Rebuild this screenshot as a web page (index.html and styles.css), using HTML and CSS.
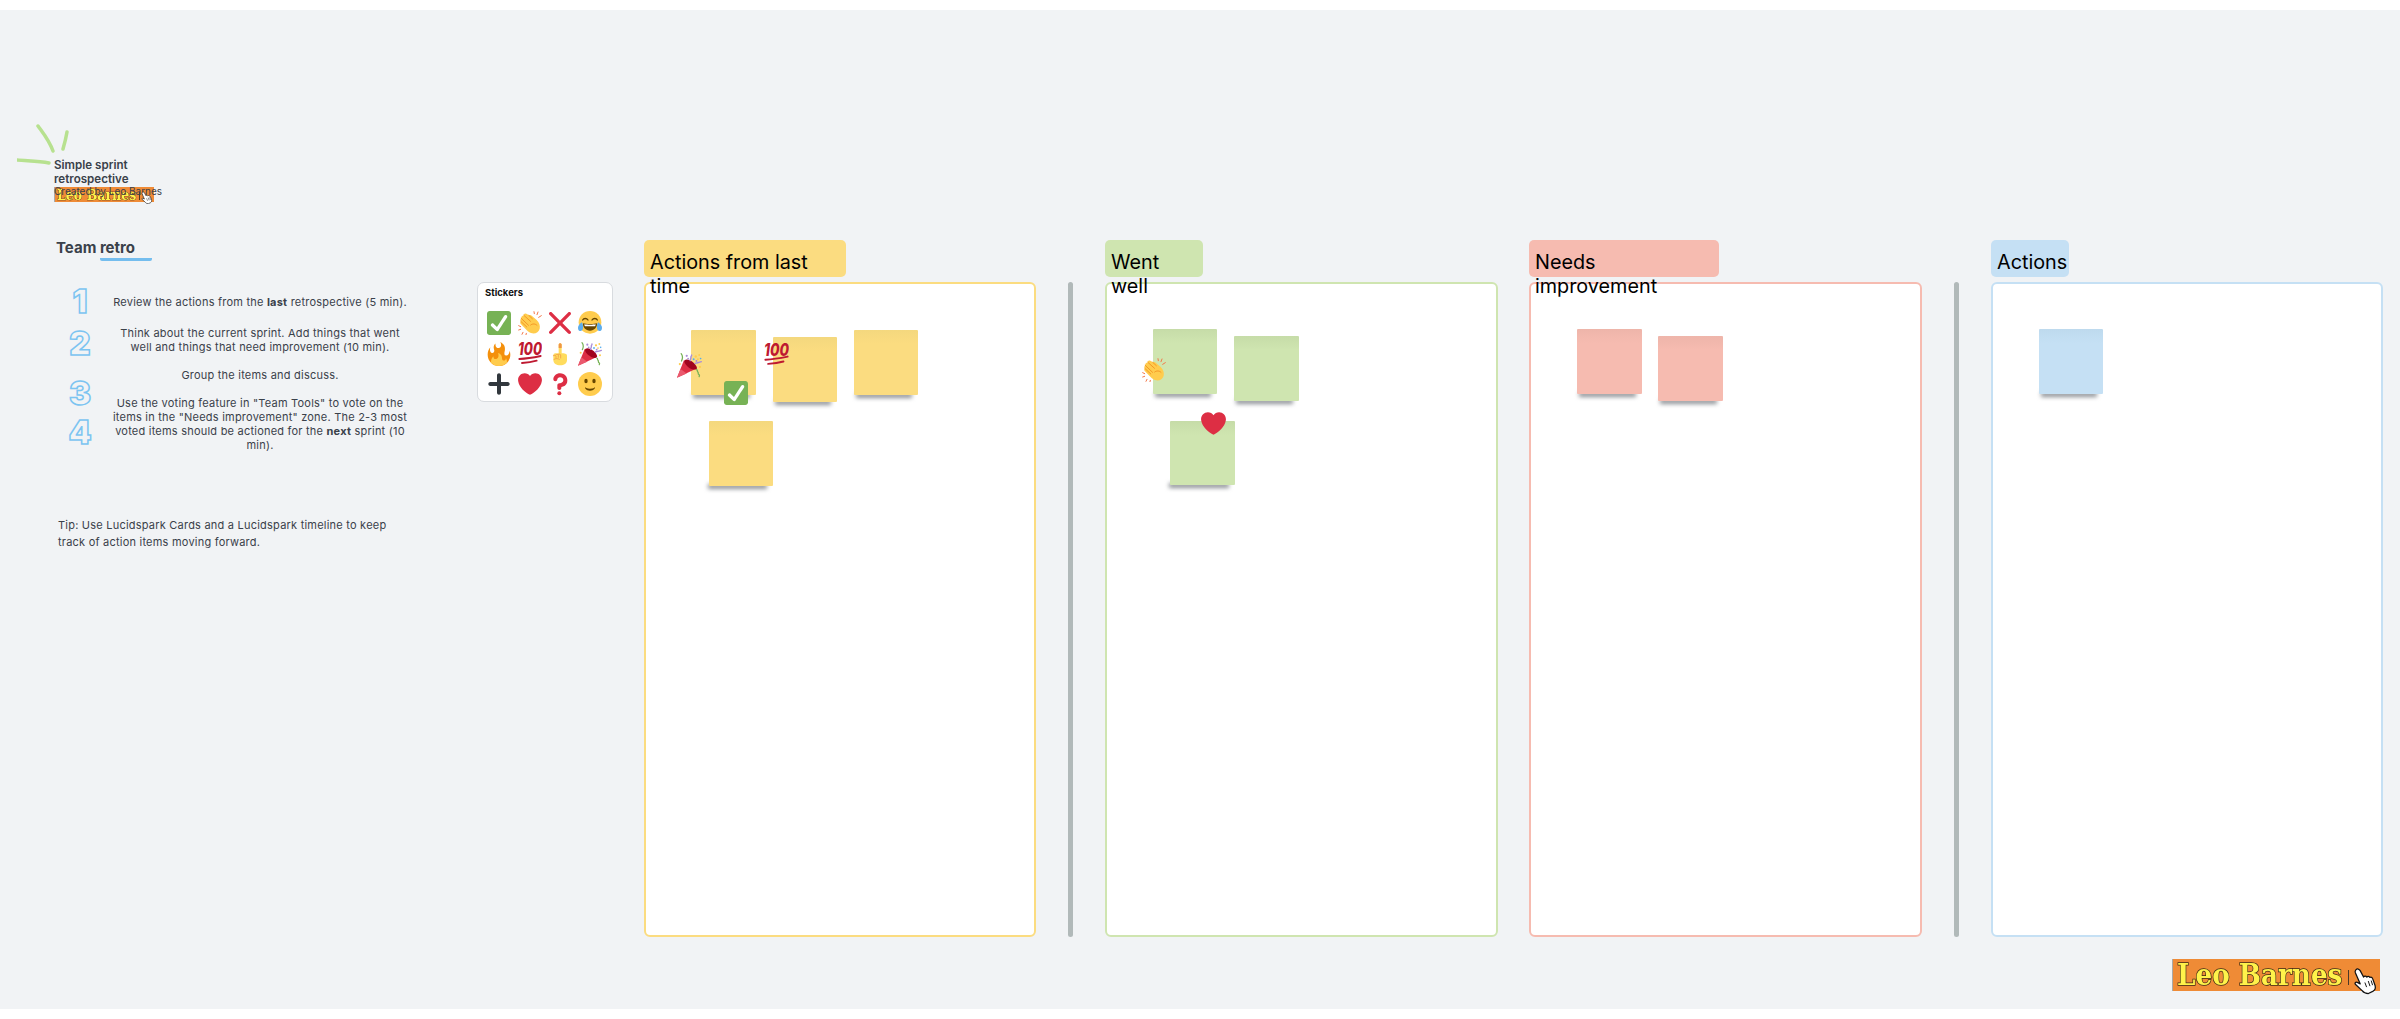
FILE: index.html
```html
<!DOCTYPE html>
<html lang="en">
<head>
  <meta charset="UTF-8">
  <title>Simple sprint retrospective</title>
  <link rel="stylesheet" href="styles.css">
</head>
<body>

  <!-- emoji set, reused by the sticker panel and the notes -->
  <svg class="sprite" xmlns="http://www.w3.org/2000/svg">
    <symbol id="e-check" viewBox="0 0 36 36">
      <path fill="#77B255" d="M36 32c0 2.209-1.791 4-4 4H4c-2.209 0-4-1.791-4-4V4c0-2.209 1.791-4 4-4h28c2.209 0 4 1.791 4 4v28z"/>
      <path fill="#FFF" d="M29.28 6.362c-1.156-.751-2.704-.422-3.458.736L14.936 23.877l-5.029-4.65c-1.014-.938-2.596-.875-3.533.138-.937 1.014-.875 2.596.139 3.533l7.209 6.666c.48.445 1.09.665 1.696.665.673 0 1.534-.282 2.099-1.139.332-.506 12.5-19.27 12.5-19.27.751-1.159.421-2.707-.737-3.458z"/>
    </symbol>
    <symbol id="e-clap" viewBox="0 0 36 36">
      <g fill="none" stroke="#F4784A" stroke-width="1.500" stroke-linecap="round">
        <path d="M1 22l3 1.500M1 28.500l3-1M6 35l1.500-3M12 35.500l.5-2M24 1l.5 3M30 1.500l-1.500 4M35 7l-4 2.500"/>
      </g>
      <path fill="#FFCC4D" d="M9 6.500l-.5-1.800c2-1.500 4-1 5.500.3l2 1.500c1.800-.8 3.500-.4 5 1l7 6c4 4 5.500 9 4.500 13-1.500 5.500-7 8.500-13 6.500-3.500-1.200-6-3.800-8.500-6.500L4.500 20c-1.500-1.500-1.500-3.500-.3-4.500-1-1.500-.8-3.500.7-4.500-.5-2 .8-4 4.100-4.500z"/>
      <path fill="none" stroke="#F19020" stroke-width="1.300" stroke-linecap="round" d="M8.800 6.500l10 9M4.800 11l11 10.500M4.200 15.500l9 8.500M16 6.500l5.500 5M19 21c3-2.500 7-2 9.500.5"/>
    </symbol>
    <symbol id="e-cross" viewBox="0 0 36 36">
      <path fill="#DD2E44" d="M21.533 18.002L33.768 5.768c.976-.976.976-2.559 0-3.535-.977-.977-2.559-.977-3.536 0L17.998 14.467 5.764 2.233c-.976-.977-2.56-.977-3.535 0-.977.976-.977 2.559 0 3.535l12.234 12.234L2.201 30.265c-.977.977-.977 2.559 0 3.535.488.488 1.128.732 1.768.732s1.28-.244 1.768-.732l12.262-12.263 12.234 12.234c.488.488 1.128.732 1.768.732.64 0 1.279-.244 1.768-.732.976-.977.976-2.559 0-3.535L21.533 18.002z"/>
    </symbol>
    <symbol id="e-joy" viewBox="0 0 36 36">
      <circle fill="#FFCC4D" cx="18" cy="17" r="17"/>
      <path fill="none" stroke="#664500" stroke-width="2" stroke-linecap="round" d="M7 13.500c1.500-3 6-3 8 0M21 13.500c2-3 6.500-3 8 0"/>
      <path fill="#664500" d="M7.500 18.500c3 1.500 18 1.500 21 0 .5 6-4 11-10.500 11s-11-5-10.500-11z"/>
      <path fill="#FFF" d="M9.500 19.800c4 .9 13 .9 17 0-.1 1.300-.4 2.300-.9 3.200H10.400c-.5-.9-.8-1.900-.9-3.200z"/>
      <path fill="#5DADEC" d="M0 25c0-3 3-6 6-8 1 2 2 6 1.500 9-.4 3-2.500 4.500-4.500 4-2-.4-3-2.500-3-5zM36 25c0-3-3-6-6-8-1 2-2 6-1.500 9 .4 3 2.500 4.500 4.500 4 2-.4 3-2.500 3-5z"/>
    </symbol>
    <symbol id="e-fire" viewBox="0 0 36 36">
      <path fill="#F4900C" d="M35 19c0-2.062-.367-4.039-1.04-5.868-.46 5.389-3.333 8.157-6.335 6.868-2.812-1.208-.917-5.917-.777-8.164.236-3.809-.012-8.169-6.931-11.794 2.875 5.5.333 8.917-2.333 9.125-2.958.231-5.667-2.542-4.667-7.042-3.238 2.386-3.332 6.402-2.333 9 1.042 2.708-.042 4.958-2.583 5.208-2.84.28-4.418-3.041-2.963-8.333C2.52 10.965 1 14.805 1 19c0 9.389 7.611 17 17 17s17-7.611 17-17z"/>
      <path fill="#FFCC4D" d="M28.394 23.999c.148 3.084-2.561 4.293-4.019 3.709-2.106-.843-1.541-2.291-2.083-5.291s-2.625-5.083-5.708-6c2.25 6.333-1.247 8.667-3.08 9.084-1.872.426-3.753-.001-3.968-4.007C7.352 23.668 6 26.676 6 30c0 .368.023.73.055 1.09C9.125 34.124 13.342 36 18 36s8.875-1.876 11.945-4.91c.032-.36.055-.722.055-1.09 0-2.187-.584-4.236-1.606-6.001z"/>
    </symbol>
    <symbol id="e-hundred" viewBox="0 0 36 36">
      <text class="hundred" x="0" y="20" textLength="36" lengthAdjust="spacingAndGlyphs">100</text>
      <path fill="none" stroke="#BE1931" stroke-width="2.800" stroke-linecap="round" d="M2 25.500c10-.5 20-2 32-4.500M6 31.500c8-.5 15-1.500 22-3.500"/>
    </symbol>
    <symbol id="e-point" viewBox="0 0 36 36">
      <path fill="#FFDC5D" d="M16 4c0-3 4.500-3 4.500 0v13c4 0 8 .5 8 3.500V27c0 5-4.500 8-10 8-6 0-10.500-3-10.500-8.500V20c0-2 1.500-3 3-3h5z"/>
      <path fill="#EF9645" d="M16 4c0-3 4.500-3 4.500 0v5H16z"/>
      <path fill="none" stroke="#EF9645" stroke-width="1.100" stroke-linecap="round" d="M8 20.500c2-.8 3.500-.5 4 .5v3M12 19c1.500-.8 3-.5 3.500.5V23M15.500 18.500c1.500-.6 3-.3 3.500.8V24M9 26c2.500-1.500 6-1.500 8 0"/>
    </symbol>
    <symbol id="e-popper" viewBox="0 0 36 36">
      <path fill="#DD2E44" d="M0 35.500L10 10.500l19 11.500z"/>
      <path fill="#EA596E" d="M0 35.500L5 23l9 6.500z"/>
      <path fill="#A0041E" d="M11.500 10c2.500-2 8 0 12 3.500s6.500 8 4.500 9.500c-2 2-8 .5-12-3s-7-8-4.500-10z"/>
      <path fill="none" stroke="#77B255" stroke-width="1.800" stroke-linecap="round" d="M6 1c2 2.500 2.500 6.500.5 10.500M28 24c2.500.5.500 2.500 2 3.500s-.5 2.500 1.500 3.500 0 2 .5 3"/>
      <path fill="none" stroke="#AA8DD8" stroke-width="2" stroke-linecap="round" d="M19 11c-.5-2 1.500-2.500 1-4.500s1.500-2 1-3.500M26 15c3-1 5.500-1.200 9-2.500"/>
      <g fill="#FFCC4D"><circle cx="27" cy="5" r="1.700"/><circle cx="32" cy="3" r="1.400"/><circle cx="4" cy="16" r="1.500"/><circle cx="33" cy="20" r="1.500"/><circle cx="30" cy="9" r="1.300"/></g>
      <g fill="#55ACEE"><circle cx="24" cy="9" r="1.400"/><circle cx="34" cy="8" r="1.200"/></g>
      <g fill="#AA8DD8"><circle cx="14" cy="4" r="1.600"/><circle cx="16" cy="8" r="1.300"/><circle cx="28" cy="11.500" r="1.400"/></g>
    </symbol>
    <symbol id="e-plus" viewBox="0 0 36 36">
      <path fill="#31373D" d="M31 15H21V5c0-1.657-1.343-3-3-3s-3 1.343-3 3v10H5c-1.657 0-3 1.343-3 3s1.343 3 3 3h10v10c0 1.657 1.343 3 3 3s3-1.343 3-3V21h10c1.657 0 3-1.343 3-3s-1.343-3-3-3z"/>
    </symbol>
    <symbol id="e-heart" viewBox="0 0 36 36">
      <path fill="#DD2E44" d="M35.885 11.833c0-5.45-4.418-9.868-9.867-9.868-3.308 0-6.227 1.633-8.018 4.129-1.791-2.496-4.71-4.129-8.017-4.129-5.45 0-9.868 4.417-9.868 9.868 0 .772.098 1.52.266 2.241C1.751 22.587 11.216 31.568 18 34.034c6.783-2.466 16.249-11.447 17.617-19.959.17-.721.268-1.469.268-2.242z"/>
    </symbol>
    <symbol id="e-question" viewBox="0 0 36 36">
      <path fill="#DD2E44" d="M17 27c-1.657 0-3-1.343-3-3v-4c0-1.657 1.343-3 3-3 .603-.006 6-1 6-5 0-2-2-4-5-4-2.441 0-4 2-4 3 0 1.657-1.343 3-3 3s-3-1.343-3-3c0-4.878 4.58-9 10-9 8 0 11 5.982 11 11 0 4.145-2.277 7.313-6.413 8.92-.9.351-1.79.587-2.587.747V24c0 1.657-1.343 3-3 3z"/>
      <circle fill="#DD2E44" cx="17" cy="32" r="3"/>
    </symbol>
    <symbol id="e-smile" viewBox="0 0 36 36">
      <circle fill="#FFCC4D" cx="18" cy="18" r="18"/>
      <path fill="#664500" d="M10.515 23.621C10.56 23.8 11.683 28 18 28c6.318 0 7.44-4.2 7.485-4.379.055-.217-.043-.442-.237-.554-.195-.111-.439-.078-.6.077C24.629 23.163 22.768 25 18 25s-6.63-1.837-6.648-1.855C11.256 23.05 11.128 23 11 23c-.084 0-.169.021-.246.064-.196.112-.294.339-.239.557z"/>
      <ellipse fill="#664500" cx="12" cy="13.500" rx="2.500" ry="3.500"/>
      <ellipse fill="#664500" cx="24" cy="13.500" rx="2.500" ry="3.500"/>
    </symbol>
    <symbol id="hand" viewBox="0 0 27 28">
      <path fill="#fff" stroke="#111" stroke-width="1.300" stroke-linejoin="round" d="M5 2.500c1.500-1.500 3.500-1 4.500.8L13 10c.5-1.300 2.600-1.400 3.400 0 .6-1 2.500-1.200 3.200.4 1-.6 2.400-.1 2.800 1.200L25 19c.6 2.500-.5 4.500-2 5.500L18 27c-3 0-5-1-6.500-3L4.500 17.500c-1-1.500.5-3 2-2L9.500 17 4.500 5.500c-.4-1-.2-2.200.5-3z"/>
      <path fill="none" stroke="#111" stroke-width="1" stroke-linecap="round" d="M14.500 16l1.500 4M18 14.500l1.500 4.500M21 14l1.200 4"/>
    </symbol>
  </svg>

  <div class="canvas">

    <section class="guide">
      <svg class="sparks" viewBox="0 0 60 50" aria-hidden="true">
        <path d="M21 3c5 7 11 14 15 25M50 9c-1 6-2 10-4 17M0 37c10 1 21 1 32 3"/>
      </svg>

      <h1 class="guide-title">Simple sprint retrospective</h1>
      <p class="created">Created by Leo Barnes</p>
      <div class="logo logo-small">
        <span class="logo-name">Leo Barnes</span>
        <svg class="logo-hand"><use href="#hand"/></svg>
      </div>

      <h2 class="team">Team <span class="team-mark">retro</span></h2>

      <div class="steps">
        <div class="step-nums">
          <span class="num num-1">1</span>
          <span class="num num-2">2</span>
          <span class="num num-3">3</span>
          <span class="num num-4">4</span>
        </div>
        <div class="step-texts">
          <p class="step-first">Review the actions from the <b>last</b> retrospective (5 min).</p>
          <p>Think about the current sprint. Add things that went well and things that need improvement (10 min).</p>
          <p>Group the items and discuss.</p>
          <p>Use the voting feature in "Team Tools" to vote on the items in the "Needs improvement" zone. The 2-3 most voted items should be actioned for the <b>next</b> sprint (10 min).</p>
        </div>
      </div>

      <p class="tip">Tip: Use Lucidspark Cards and a Lucidspark timeline to keep track of action items moving forward.</p>
    </section>

    <aside class="stickers">
      <h3 class="stickers-title">Stickers</h3>
      <div class="sticker-grid">
        <svg><use href="#e-check"/></svg>
        <svg><use href="#e-clap"/></svg>
        <svg><use href="#e-cross"/></svg>
        <svg><use href="#e-joy"/></svg>
        <svg><use href="#e-fire"/></svg>
        <svg><use href="#e-hundred"/></svg>
        <svg><use href="#e-point"/></svg>
        <svg><use href="#e-popper"/></svg>
        <svg><use href="#e-plus"/></svg>
        <svg><use href="#e-heart"/></svg>
        <svg><use href="#e-question"/></svg>
        <svg><use href="#e-smile"/></svg>
      </div>
    </aside>

    <section class="zone zone-yellow zone-first">
      <h2 class="zone-head head-last">Actions from last time</h2>
      <div class="board">
        <div class="note n1-a"></div>
        <div class="note n1-b"></div>
        <div class="note n1-c"></div>
        <div class="note n1-d"></div>
        <svg class="stuck st-popper"><use href="#e-popper"/></svg>
        <svg class="stuck st-hundred"><use href="#e-hundred"/></svg>
        <svg class="stuck st-check"><use href="#e-check"/></svg>
      </div>
    </section>

    <div class="divider"></div>

    <section class="zone zone-green">
      <h2 class="zone-head head-well">Went well</h2>
      <div class="board">
        <div class="note n2-a"></div>
        <div class="note n2-b"></div>
        <div class="note n2-c"></div>
        <svg class="stuck st-clap"><use href="#e-clap"/></svg>
        <svg class="stuck st-heart"><use href="#e-heart"/></svg>
      </div>
    </section>

    <section class="zone zone-red">
      <h2 class="zone-head head-needs">Needs improvement</h2>
      <div class="board">
        <div class="note n3-a"></div>
        <div class="note n3-b"></div>
      </div>
    </section>

    <div class="divider"></div>

    <section class="zone zone-blue">
      <h2 class="zone-head head-actions">Actions</h2>
      <div class="board">
        <div class="note n4-a"></div>
      </div>
    </section>

    <div class="logo logo-big">
      <span class="logo-name">Leo Barnes</span>
      <svg class="logo-hand"><use href="#hand"/></svg>
    </div>
  </div>

</body>
</html>
```

FILE: styles.css
```css
body {
  margin: 0;
  background: #fff;
  font-family: Inter, "Noto Sans", sans-serif;
  color: #3a414a;
}

.sprite {
  display: none;
}

.canvas {
  position: relative;
  display: flex;
  align-items: flex-start;
  height: 999px;
  margin-top: 10px;
  background: #f1f3f5;
  overflow: hidden;
}

/* left column */
.guide {
  position: relative;
  box-sizing: border-box;
  width: 477px;
  flex: none;
  padding: 148px 0 0 54px;
}

.sparks {
  position: absolute;
  left: 17px;
  top: 113px;
  width: 60px;
  height: 50px;
  fill: none;
  stroke: #b7e18f;
  stroke-width: 3.5;
  stroke-linecap: round;
}

.guide-title {
  width: 110px;
  margin: 0;
  font-size: 11.6px;
  line-height: 14px;
  font-weight: 600;
}

.created {
  position: relative;
  z-index: 1;
  margin: -2px 0 0;
  font-size: 10px;
  line-height: 14px;
  white-space: nowrap;
}

.team {
  margin: 36px 0 0 2px;
  font-size: 15px;
  line-height: 20px;
  font-weight: 700;
}

.team-mark {
  display: inline-block;
  border-bottom: 3px solid #74bdee;
  border-radius: 2px;
  height: 20px;
  width: 52px;
}

.steps {
  display: flex;
  margin: 28px 0 0 13px;
}

.step-nums {
  display: flex;
  flex-direction: column;
  width: 42px;
  flex: none;
}

.num {
  width: 26px;
  height: 24px;
  font-size: 33px;
  line-height: 24px;
  font-weight: 900;
  text-align: center;
  color: #f1f3f5;
  -webkit-text-stroke: 1.5px #7cc4f1;
}

.num-1 { margin-top: 0; }
.num-2 { margin-top: 18px; }
.num-3 { margin-top: 26px; }
.num-4 { margin-top: 15px; }

.step-texts {
  width: 302px;
  flex: none;
  font-size: 11px;
  letter-spacing: 0.22px;
  line-height: 14px;
  text-align: center;
  margin-top: 6px;
}

.step-texts p {
  margin: 0 0 14px;
}

.step-texts .step-first {
  margin-bottom: 17px;
}

.tip {
  width: 345px;
  margin: 51px 0 0 4px;
  font-size: 11px;
  letter-spacing: 0.22px;
  line-height: 17px;
}

/* sticker tray */
.stickers {
  box-sizing: border-box;
  width: 136px;
  height: 120px;
  flex: none;
  margin-top: 272px;
  padding: 4px 6px;
  background: #fff;
  border: 1.5px solid #d8dbdf;
  border-radius: 7px;
}

.stickers-title {
  margin: 0 0 0 1px;
  font-size: 9.5px;
  line-height: 12px;
  font-weight: 700;
  color: #111;
}

.sticker-grid {
  display: grid;
  grid-template-columns: repeat(4, 30.4px);
  grid-auto-rows: 30.5px;
  margin-top: 9px;
  place-items: center;
}

.sticker-grid svg {
  width: 24px;
  height: 24px;
}

.hundred {
  font-family: Inter, sans-serif;
  font-size: 25px;
  font-weight: 800;
  font-style: italic;
  fill: #be1931;
}

/* retro columns */
.zone {
  width: 393px;
  flex: none;
  margin-top: 230px;
}

.zone-first {
  width: 392px;
  margin-left: 31px;
}

.zone-red {
  margin-left: 31px;
}

.zone-blue {
  width: 392px;
}

.zone-head {
  box-sizing: border-box;
  height: 37px;
  margin: 0 0 5px;
  padding: 10px 6px 0;
  border-radius: 5px;
  font-size: 19.8px;
  line-height: 24px;
  font-weight: 400;
  color: #000;
  position: relative;
  z-index: 2;
}

.head-last { width: 202px; }
.head-well { width: 98px; }
.head-needs { width: 190px; }
.head-actions { width: 78px; }

.board {
  position: relative;
  box-sizing: border-box;
  height: 655px;
  background: #fff;
  border: 2px solid;
  border-radius: 6px;
  isolation: isolate;
}

.divider {
  width: 5px;
  height: 655px;
  flex: none;
  margin: 272px 32px 0;
  background: #b1b9b9;
  border-radius: 3px;
}

.zone-yellow .zone-head { background: #fbdc80; }
.zone-yellow .board { border-color: #fbdc80; }
.zone-yellow .note { --note: #fbdc80; --note-top: #f4d87e; }

.zone-green .zone-head { background: #cfe5b0; }
.zone-green .board { border-color: #cfe5b0; }
.zone-green .note { --note: #cfe5b0; --note-top: #c6dca8; }

.zone-red .zone-head { background: #f6bbb0; }
.zone-red .board { border-color: #f6bbb0; }
.zone-red .note { --note: #f6bbb0; --note-top: #eeb5aa; }

.zone-blue .zone-head { background: #c5e0f4; }
.zone-blue .board { border-color: #c5e0f4; }
.zone-blue .note { --note: #c5e0f4; --note-top: #bedaee; }

/* notes sit on the board wherever people dropped them */
.note {
  position: absolute;
  width: 65px;
  height: 65px;
  border-radius: 1px;
  background: linear-gradient(var(--note-top), var(--note) 14px);
}

.note::before {
  content: "";
  position: absolute;
  z-index: -1;
  left: 2px;
  right: 6px;
  bottom: -3px;
  height: 5px;
  background: #8d9196;
  filter: blur(2px);
}

.n1-a { left: 45px; top: 46px; }
.n1-b { left: 127px; top: 53px; width: 64px; }
.n1-c { left: 208px; top: 46px; width: 64px; }
.n1-d { left: 63px; top: 137px; width: 64px; }
.n1-d::before { left: -1px; }

.n2-a { left: 46px; top: 45px; width: 64px; }
.n2-b { left: 127px; top: 52px; }
.n2-c { left: 63px; top: 137px; height: 64px; }
.n2-c::before { left: -1px; }

.n3-a { left: 46px; top: 45px; }
.n3-b { left: 127px; top: 52px; }

.n4-a { left: 46px; top: 45px; width: 64px; }

.stuck {
  position: absolute;
  width: 25px;
  height: 25px;
}

.st-popper { left: 31px; top: 69px; }
.st-hundred { left: 118px; top: 58px; }
.st-check { left: 78px; top: 97px; width: 24px; height: 24px; }
.st-clap { left: 35px; top: 74px; width: 24px; height: 24px; }
.st-heart { left: 94px; top: 127px; }

/* name tag, the hand and caret hang off its right end */
.logo {
  position: relative;
  box-sizing: border-box;
  width: 6.93em;
  height: 1.067em;
  padding-left: 0.13em;
  background: #ef8b36;
  border-left: 1px solid #a9a9a9;
}

.logo::after {
  content: "";
  position: absolute;
  left: 5.83em;
  top: 0.37em;
  width: 0.04em;
  height: 0.5em;
  background: #4a3a28;
}

.logo-name {
  display: block;
  font-family: "DejaVu Serif", serif;
  font-size: 1em;
  line-height: 1.067em;
  font-weight: 700;
  white-space: nowrap;
  color: #fff24a;
  -webkit-text-stroke: 0.05em #3b2a14;
  paint-order: stroke fill;
  transform-origin: left center;
  transform: scaleX(0.875);
}

.logo-hand {
  position: absolute;
  z-index: 1;
  left: 5.93em;
  top: 0.27em;
  width: 0.87em;
  height: 0.93em;
}

.logo-small {
  font-size: 14.4px;
  margin-top: -11px;
}

.logo-big {
  position: absolute;
  left: 2172px;
  top: 949px;
  font-size: 30px;
}
```
